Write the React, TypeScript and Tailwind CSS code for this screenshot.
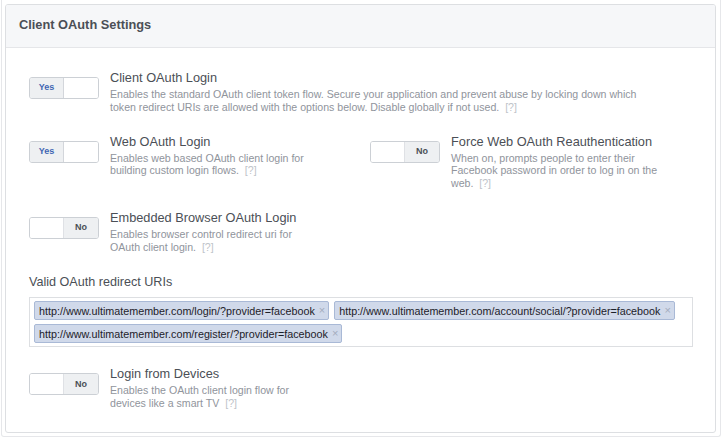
import React from "react";

const font = { fontFamily: '"Liberation Sans", Arial, Helvetica, sans-serif' };

function Toggle({ on }: { on: boolean }) {
  return (
    <div className="mt-[8px] flex h-[22px] w-[70px] shrink-0 overflow-hidden rounded-[3px] border border-[#ccd0d5] bg-white">
      <div
        className={
          on
            ? "flex w-[34px] items-center justify-center border-r border-[#d3d6db] bg-[#eef0f2] text-[9px] font-bold text-[#4267b2]"
            : "w-[34px] border-r border-[#dfe1e5] bg-white"
        }
      >
        {on ? "Yes" : ""}
      </div>
      <div
        className={
          on
            ? "flex-1 bg-white"
            : "flex flex-1 items-center justify-center bg-[#eef0f2] text-[9px] font-bold text-[#4b4f56]"
        }
      >
        {on ? "" : "No"}
      </div>
    </div>
  );
}

function Setting({
  on,
  title,
  desc,
  width,
  extra = "",
}: {
  on: boolean;
  title: string;
  desc: string;
  width: string;
  extra?: string;
}) {
  return (
    <div className={"flex items-start gap-[11px] " + extra}>
      <Toggle on={on} />
      <div className={width}>
        <div className="text-[12.75px] leading-[17px] text-[#4b4f56]">{title}</div>
        <p className="mt-[2px] text-[10.6px] leading-[12.75px] text-[#90949c]">
          {desc}
          {"\u00a0 "}
          <span className="text-[#bec3c9]">[?]</span>
        </p>
      </div>
    </div>
  );
}

function Tag({ text }: { text: string }) {
  return (
    <div className="flex h-[19px] items-center rounded-[2px] border border-[#a9b9d6] bg-[#d0d9ea] pl-[4px] pr-[3px] text-[10.75px] text-[#1d2129]">
      <span>{text}</span>
      <span className="ml-[4px] text-[11px] leading-none text-[#a3acbd]">×</span>
    </div>
  );
}

export default function App() {
  return (
    <div className="h-[439px] w-[722px] bg-white" style={font}>
      <div className="ml-[1px] h-[437px] w-[720px] rounded-b-[3px] border-x border-b border-[#e6e7ea] pt-[4px]">
        <div className="ml-[3px] h-[429px] w-[711px] overflow-hidden rounded-[3px] border border-[#dddfe2] bg-white">
          <div className="flex h-[43px] items-center border-b border-[#e5e6e9] bg-[#f6f7f9] pb-[2px] pl-[13px]">
            <span className="text-[12.8px] font-bold text-[#4b4f56]">Client OAuth Settings</span>
          </div>
          <div className="flex flex-col gap-[19px] pl-[23px] pr-[22px] pt-[21px]">
            <Setting
              on
              title="Client OAuth Login"
              desc="Enables the standard OAuth client token flow. Secure your application and prevent abuse by locking down which token redirect URIs are allowed with the options below. Disable globally if not used."
              width="w-[545px]"
            />
            <div className="grid grid-cols-[341px_1fr]">
              <Setting
                on
                title="Web OAuth Login"
                desc="Enables web based OAuth client login for building custom login flows."
                width="w-[210px]"
              />
              <Setting
                on={false}
                title="Force Web OAuth Reauthentication"
                desc="When on, prompts people to enter their Facebook password in order to log in on the web."
                width="w-[210px]"
              />
            </div>
            <Setting
              on={false}
              title="Embedded Browser OAuth Login"
              desc="Enables browser control redirect uri for OAuth client login."
              width="w-[210px]"
            />
            <div className="mt-[2px] flex flex-col">
              <div className="text-[12.6px] leading-[17px] text-[#4b4f56]">Valid OAuth redirect URIs</div>
              <div className="mt-[6px] flex flex-wrap gap-x-[5px] gap-y-[4px] border border-[#dddfe2] bg-white px-[4px] pb-[3px] pt-[3px]">
                <Tag text="http://www.ultimatemember.com/login/?provider=facebook" />
                <Tag text="http://www.ultimatemember.com/account/social/?provider=facebook" />
                <Tag text="http://www.ultimatemember.com/register/?provider=facebook" />
              </div>
            </div>
            <Setting
              on={false}
              title="Login from Devices"
              desc="Enables the OAuth client login flow for devices like a smart TV"
              width="w-[210px]"
              extra="-mt-[1px]"
            />
          </div>
        </div>
      </div>
    </div>
  );
}
